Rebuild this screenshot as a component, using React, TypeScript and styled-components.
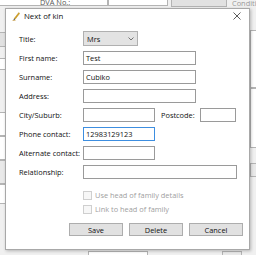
import React from "react";
import styled, { createGlobalStyle } from "styled-components";

const Global = createGlobalStyle`
  html, body { margin: 0; padding: 0; }
  body { width: 256px; height: 255px; overflow: hidden; background: #f0f0f0; }
  * { box-sizing: border-box; }
`;

const Desktop = styled.div`
  position: relative;
  width: 256px;
  height: 255px;
  overflow: hidden;
  background: #f0f0f0;
  font-family: "Open Sans", "Liberation Sans", sans-serif;
  font-size: 7.4px;
  color: #000;
`;

const BgField = styled.div<{ $x: number; $y: number; $w: number; $h: number; $bg?: string }>`
  position: absolute;
  left: ${(p) => p.$x}px;
  top: ${(p) => p.$y}px;
  width: ${(p) => p.$w}px;
  height: ${(p) => p.$h}px;
  background: ${(p) => p.$bg ?? "#fff"};
  border: 1px solid #b4b4b4;
`;

const BgText = styled.div<{ $x: number; $y: number; $c?: string }>`
  position: absolute;
  left: ${(p) => p.$x}px;
  top: ${(p) => p.$y}px;
  color: ${(p) => p.$c ?? "#444"};
  font-size: 7.4px;
  line-height: 8px;
  white-space: nowrap;
`;

const Dialog = styled.div`
  position: absolute;
  left: 5px;
  top: 8px;
  width: 245px;
  height: 242px;
  background: #fff;
  border: 1px solid #a8a8a8;
  box-shadow: 1px 1px 3px rgba(0, 0, 0, 0.25);
  display: flex;
  flex-direction: column;
`;

const TitleBar = styled.div`
  height: 14px;
  display: flex;
  align-items: center;
  padding: 0 0 0 6px;
  gap: 4px;
`;

const TitleText = styled.span`
  flex: 1;
  font-size: 7.8px;
  color: #111;
  line-height: 10px;
`;

const CloseBtn = styled.div`
  width: 22px;
  height: 14px;
  display: flex;
  align-items: center;
  justify-content: center;
  margin-right: 1px;
`;

const Body = styled.div`
  display: flex;
  flex-direction: column;
  padding: 9px 0 0 13px;
`;

const Row = styled.div`
  display: flex;
  align-items: center;
  height: 14px;
  margin-bottom: 5px;
`;

const Label = styled.div<{ $w?: number }>`
  width: ${(p) => p.$w ?? 64}px;
  flex: none;
  line-height: 10px;
  color: #111;
  white-space: nowrap;
`;

const Input = styled.div<{ $w: number; $focus?: boolean }>`
  width: ${(p) => p.$w}px;
  height: 14px;
  flex: none;
  border: 1px solid ${(p) => (p.$focus ? "#3d8ee0" : "#9a9a9a")};
  background: #fff;
  padding: 0 2px;
  line-height: 12px;
  color: #111;
  white-space: nowrap;
  overflow: hidden;
`;

const Select = styled.div`
  width: 55px;
  height: 15px;
  border: 1px solid #b0b0b0;
  background: #e3e3e3;
  display: flex;
  align-items: center;
  justify-content: space-between;
  padding: 0 3px 0 3px;
  margin-top: -1px;
  color: #111;
`;

const Gap = styled.div<{ $w: number }>`
  width: ${(p) => p.$w}px;
  flex: none;
`;

const Checks = styled.div`
  display: flex;
  flex-direction: column;
  gap: 5px;
  padding-left: 64px;
  margin-top: 7px;
`;

const CheckRow = styled.div`
  display: flex;
  align-items: center;
  gap: 3px;
  height: 9px;
  color: #a0a0a0;
  line-height: 9px;
`;

const Box = styled.div`
  width: 9px;
  height: 9px;
  border: 1px solid #cfcfcf;
  background: #f7f7f7;
`;

const Buttons = styled.div`
  display: flex;
  gap: 6px;
  padding-left: 50px;
  margin-top: 9px;
`;

const Button = styled.div`
  width: 54px;
  height: 13px;
  border: 1px solid #adadad;
  background: #e1e1e1;
  display: flex;
  align-items: center;
  justify-content: center;
  color: #111;
  line-height: 10px;
`;

const Icon = () => (
  <svg width="8" height="9" viewBox="0 0 8 9">
    <path d="M6.8 0.6 L2.2 6.4 L3.2 7.2 L7.6 1.6 Z" fill="#d9a520" stroke="#a77a10" strokeWidth="0.4" />
    <path d="M2.2 6.4 L1.2 8.4 L3.2 7.2 Z" fill="#333" />
    <path d="M0.5 8.6 L3.5 8.6" stroke="#c08a20" strokeWidth="0.6" />
  </svg>
);

const CloseIcon = () => (
  <svg width="8" height="8" viewBox="0 0 8 8">
    <path d="M0.5 0.5 L7.5 7.5 M7.5 0.5 L0.5 7.5" stroke="#333" strokeWidth="0.8" />
  </svg>
);

const Chevron = () => (
  <svg width="6" height="4" viewBox="0 0 6 4">
    <path d="M0.5 0.5 L3 3 L5.5 0.5" stroke="#555" strokeWidth="0.8" fill="none" />
  </svg>
);

export default function App() {
  return (
    <>
      <Global />
      <Desktop>
        <BgField $x={-2} $y={-3} $w={110} $h={9} />
        <BgText $x={40} $y={-2} $c="#555">DVA No.:</BgText>
        <BgField $x={108} $y={-3} $w={60} $h={9} />
        <BgField $x={171} $y={-3} $w={56} $h={10} $bg="#e1e1e1" />
        <BgText $x={232} $y={-1} $c="#999">Conditio</BgText>
        <BgField $x={-2} $y={32} $w={8} $h={15} $bg="#e1e1e1" />
        <BgField $x={-2} $y={58} $w={8} $h={12} />
        <BgField $x={-2} $y={112} $w={8} $h={24} />
        <BgField $x={-2} $y={136} $w={8} $h={24} />
        <BgField $x={-2} $y={160} $w={8} $h={24} $bg="#e9e9e9" />
        <BgField $x={-2} $y={184} $w={8} $h={20} />
        <BgField $x={250} $y={30} $w={10} $h={58} />
        <BgField $x={250} $y={88} $w={10} $h={60} />
        <BgField $x={250} $y={163} $w={10} $h={14} $bg="#e9e9e9" />
        <BgField $x={88} $y={251} $w={60} $h={10} />
        <BgField $x={222} $y={251} $w={20} $h={10} $bg="#e9e9e9" />
        <Dialog>
          <TitleBar>
            <Icon />
            <TitleText>Next of kin</TitleText>
            <CloseBtn>
              <CloseIcon />
            </CloseBtn>
          </TitleBar>
          <Body>
            <Row>
              <Label>Title:</Label>
              <Select>
                <span>Mrs</span>
                <Chevron />
              </Select>
            </Row>
            <Row>
              <Label>First name:</Label>
              <Input $w={113}>Test</Input>
            </Row>
            <Row>
              <Label>Surname:</Label>
              <Input $w={113}>Cubiko</Input>
            </Row>
            <Row>
              <Label>Address:</Label>
              <Input $w={113} />
            </Row>
            <Row>
              <Label>City/Suburb:</Label>
              <Input $w={72} />
              <Gap $w={6} />
              <Label $w={39}>Postcode:</Label>
              <Input $w={36} />
            </Row>
            <Row>
              <Label>Phone contact:</Label>
              <Input $w={72} $focus>
                12983129123
              </Input>
            </Row>
            <Row>
              <Label>Alternate contact:</Label>
              <Input $w={72} />
            </Row>
            <Row>
              <Label>Relationship:</Label>
              <Input $w={154} />
            </Row>
            <Checks>
              <CheckRow>
                <Box />
                <span>Use head of family details</span>
              </CheckRow>
              <CheckRow>
                <Box />
                <span>Link to head of family</span>
              </CheckRow>
            </Checks>
            <Buttons>
              <Button>Save</Button>
              <Button>Delete</Button>
              <Button>Cancel</Button>
            </Buttons>
          </Body>
        </Dialog>
      </Desktop>
    </>
  );
}
